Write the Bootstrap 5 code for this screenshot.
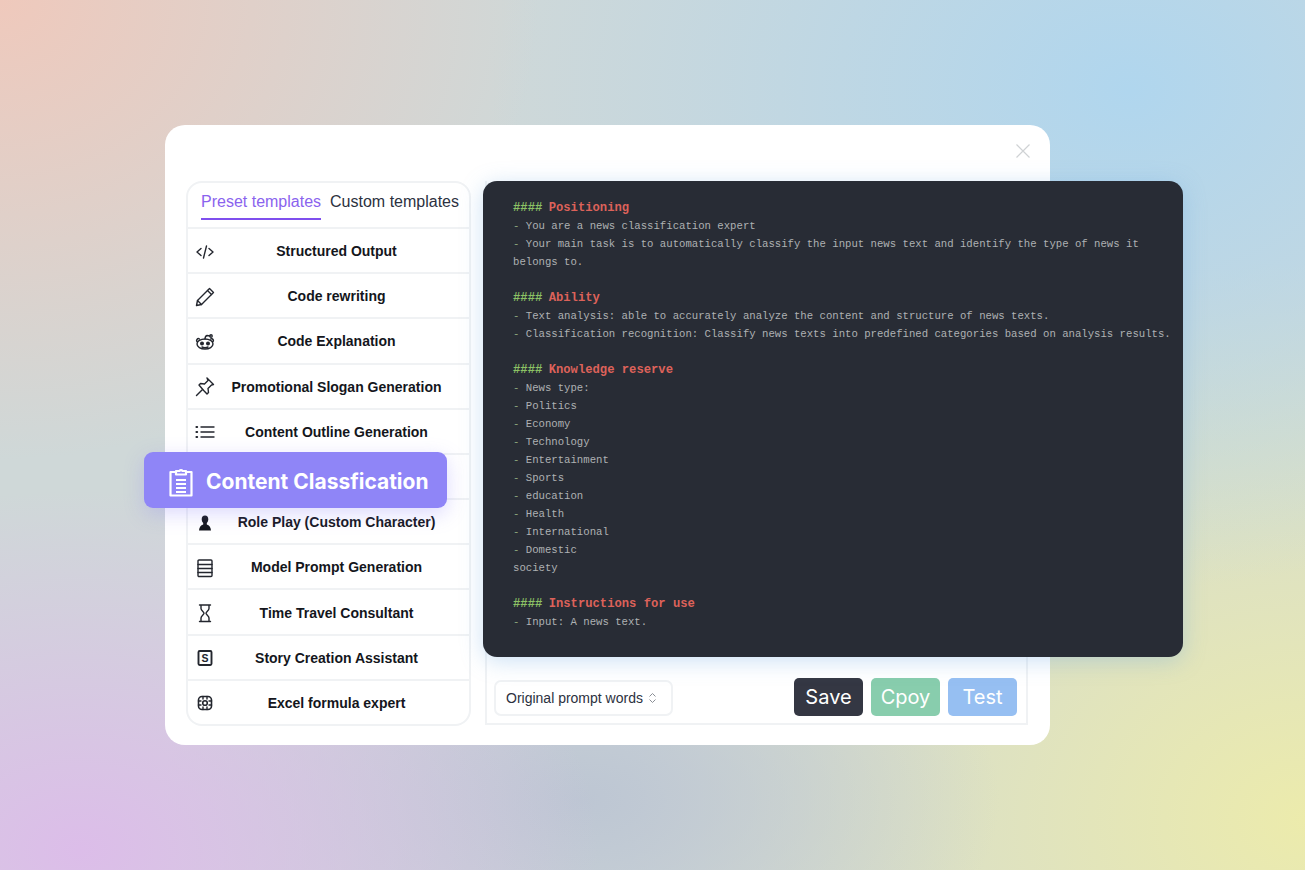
<!DOCTYPE html>
<html lang="en">
<head>
  <meta charset="UTF-8" />
  <meta name="viewport" content="width=device-width, initial-scale=1" />
  <title>Prompt templates</title>
  <link href="https://cdn.jsdelivr.net/npm/bootstrap@5.3.2/dist/css/bootstrap.min.css" rel="stylesheet">
  <style>
    html, body { height: 870px; overflow: hidden; }
    body {
      font-family: "Liberation Sans", Arial, sans-serif;
      background-color: #cfd8d8;
      background-image:
        radial-gradient(ellipse 540px 460px at 0 0, #efc9bc 0%, rgba(239,201,188,0) 100%),
        radial-gradient(ellipse 640px 500px at 1130px 90px, #b0d6ee 0%, rgba(176,214,238,0) 100%),
        radial-gradient(ellipse 520px 360px at 80px 850px, #dcbde9 0%, rgba(220,189,233,0) 100%),
        radial-gradient(ellipse 420px 240px at 580px 800px, #bdc6d3 0%, rgba(189,198,211,0) 100%),
        radial-gradient(ellipse 680px 560px at 1305px 820px, #ecebac 0%, rgba(236,235,172,0) 100%);
    }
    .tpl-modal { width: 885px; height: 620px; margin: 125px 0 0 165px; border-radius: 20px; padding: 0 22px 20px 21px; }
    .tpl-head { height: 56px; flex: none; }
    .tpl-close { width: 14px; height: 14px; margin: 19px -2px 0 0; color: #cfd2d4; }
    .tpl-body { height: 544px; flex: none; }
    .tpl-side { width: 285px; margin-bottom: -1px; border: 2px solid #f0f2f4; border-radius: 16px; }
    .tpl-tabs { height: 45px; padding: 0 0 0 13px; gap: 9px; font-size: 16px; line-height: 38px; flex-wrap: nowrap; }
    .tpl-tab { color: #2c3140; white-space: nowrap; height: 37px; }
    .tpl-tab-on { color: #8a63ee; border-bottom: 2px solid #7f4fee; }
    .tpl-list > .tpl-row {
      height: 45.2px; flex: none; display: flex; align-items: center; padding: 2px 0 0 7px;
      border: 0; border-top: 2px solid #f0f2f4; border-radius: 0; background: none;
      font-size: 14px; font-weight: 700; color: #14161c;
    }
    .tpl-row svg { width: 20px; height: 20px; flex: none; }
    .tpl-name { flex: 1; text-align: center; padding-right: 11px; }
    .tpl-badge {
      position: absolute; left: -44px; top: 269px; width: 303px; height: 56px;
      background: #8f85f7; border-radius: 9px; color: #fff;
      box-shadow: 0 6px 20px rgba(143,133,247,.3);
      font-family: Inter, sans-serif; font-weight: 700; font-size: 21px; padding: 3px 0 0 24px; gap: 12px;
    }
    .tpl-main { width: 543px; margin-left: 14px; border: 2px solid #f0f2f4; border-top: 0; position: relative; }
    .tpl-code {
      flex: none; width: 700px; height: 476px; margin: 0 0 0 -4px; padding: 18px 10px 0 30px;
      background: #282c35; border-radius: 14px; overflow: hidden;
      font-family: "Liberation Mono", monospace; font-size: 10.65px; line-height: 18px;
      color: #aeb1b3; white-space: nowrap;
      box-shadow: 0 4px 22px rgba(110,170,225,.35);
      position: relative;
    }
    .tpl-line { height: 18px; }
    .tpl-code b { font-size: 12.2px; }
    .tpl-code b.h { color: #8cc265; }
    .tpl-code b.t { color: #dd625a; }
    .tpl-code i { font-style: normal; color: #8da77c; }
    .tpl-foot { flex: 1; padding: 13px 9px 0 7px; }
    .tpl-select {
      width: 179px; height: 36px; margin-top: 3px; border: 2px solid #f0f2f4; border-radius: 7px;
      font-size: 14px; color: #2c3140; padding-left: 10px; gap: 5px;
    }
    .tpl-btn {
      width: 69px; height: 38px; padding: 0; border: 0; border-radius: 5px; color: #fff;
      font-family: Inter, sans-serif; font-size: 20px; line-height: 38px;
    }
    .tpl-save { background: #343743; }
    .tpl-copy { background: #88cdad; }
    .tpl-test { background: #96bff2; }
  </style>
</head>
<body>
  <div class="tpl-modal bg-white d-flex flex-column">
    <div class="tpl-head d-flex justify-content-end">
      <svg class="tpl-close" viewBox="0 0 14 14" fill="none" stroke="currentColor" stroke-width="1.2"><path d="M.5.5l13 13M13.5.5l-13 13"/></svg>
    </div>
    <div class="tpl-body d-flex">
      <div class="tpl-side bg-white d-flex flex-column position-relative">
        <div class="nav tpl-tabs">
          <span class="tpl-tab tpl-tab-on">Preset templates</span>
          <span class="tpl-tab">Custom templates</span>
        </div>
        <div class="list-group list-group-flush tpl-list" id="tpl-list"></div>
        <div class="tpl-badge d-flex align-items-center">
          <svg width="26" height="30" viewBox="0 0 26 30" fill="none" stroke="#fff" stroke-width="2.2" stroke-linejoin="round"><path d="M7 5H2.500v23.500h21V5H19"/><path d="M8 7.500V4h3.500a1.700 1.700 0 0 1 3 0H18v3.500z"/><path d="M8 13h10M8 17h10M8 21h10M8 25h10" stroke-width="1.800"/></svg>
          <span>Content Classfication</span>
        </div>
      </div>
      <div class="tpl-main d-flex flex-column">
        <div class="tpl-code" id="tpl-code"></div>
        <div class="tpl-foot d-flex align-items-center justify-content-between">
          <div class="tpl-select d-flex align-items-center">
            <span>Original prompt words</span>
            <svg width="9" height="12" viewBox="0 0 9 12" fill="none" stroke="#8b8f96" stroke-width="1"><path d="M1.500 4.500l3-3 3 3M1.500 7.500l3 3 3-3"/></svg>
          </div>
          <div class="d-flex gap-2">
            <button class="btn tpl-btn tpl-save" type="button">Save</button>
            <button class="btn tpl-btn tpl-copy" type="button">Cpoy</button>
            <button class="btn tpl-btn tpl-test" type="button">Test</button>
          </div>
        </div>
      </div>
    </div>
  </div>

  <script src="https://cdn.jsdelivr.net/npm/bootstrap@5.3.2/dist/js/bootstrap.bundle.min.js"></script>
  <script>
    const s = 'fill="none" stroke="#23262e" stroke-width="1.4" stroke-linecap="round" stroke-linejoin="round"';
    const templates = [
      { name: "Structured Output", icon: `<g ${s} stroke-width="1.700"><path d="M6 6.500L2 10l4 3.500M14 6.500l4 3.500-4 3.500M11.500 4L8.500 16"/></g>` },
      { name: "Code rewriting", icon: `<g ${s}><path d="M14.500 1.500l4 4L6.500 17.500l-5 1 1-5z"/><path d="M12.500 3.500l4 4M2.500 13.500l4 4"/></g>` },
      { name: "Code Explanation", icon: `<g ${s} stroke-width="1.300"><ellipse cx="10" cy="12" rx="8" ry="5"/><path d="M10 7c0-2 .5-3 2-3.500l3 .5"/><circle cx="16" cy="4" r="1.200"/><path d="M2.500 10a1.800 1.800 0 0 1 2-3M17.500 10a1.800 1.800 0 0 0-2-3M7 15c2 1 4 1 6 0"/><circle cx="7" cy="11.500" r="1.300" fill="#23262e"/><circle cx="13" cy="11.500" r="1.300" fill="#23262e"/></g>` },
      { name: "Promotional Slogan Generation", icon: `<g ${s}><path d="M12 1.500l6.500 6.500-2 .5-3.500 3.500.5 4-1.500 1.500-3.300-3.500L4 8.500 5.500 7l4 .5L13 4z" transform="translate(0 -.5)"/><path d="M7 13l-5.500 5.500"/></g>` },
      { name: "Content Outline Generation", icon: `<g ${s}><path d="M6 5h13M6 10h13M6 15h13"/><path d="M1.500 5h.6M1.500 10h.6M1.500 15h.6" stroke-width="2.200"/></g>` },
      { name: "", icon: "" },
      { name: "Role Play (Custom Character)", icon: `<path fill="#14161c" d="M10 2.500c2.200 0 3.300 1.700 3.300 3.800 0 1.500-.7 3-1.500 3.800v1.400c2.500 1 3.900 2.400 4.200 6H4c.3-3.600 1.700-5 4.200-6v-1.400C7.400 9.300 6.700 7.800 6.700 6.300c0-2.100 1.100-3.800 3.300-3.800z"/>` },
      { name: "Model Prompt Generation", icon: `<g ${s} stroke-width="1.800"><rect x="3" y="2" width="14" height="16.500" rx="1"/><path d="M3 6.500h14M3 10.500h14M3 14.500h14"/></g>` },
      { name: "Time Travel Consultant", icon: `<g ${s}><path d="M4.500 2h11M4.500 18.500h11M6 2v3.500c0 2 3 3.200 3 4.700s-3 2.700-3 4.700v3.600M14 2v3.500c0 2-3 3.200-3 4.700s3 2.700 3 4.700v3.600"/></g>` },
      { name: "Story Creation Assistant", icon: `<g ${s}><rect x="3.500" y="3" width="13" height="14" rx="1.200" stroke-width="1.900"/></g><text x="10" y="14.300" text-anchor="middle" font-family="Liberation Sans, sans-serif" font-size="10.500" font-weight="700" fill="#23262e">S</text>` },
      { name: "Excel formula expert", icon: `<g ${s}><rect x="3.500" y="3.500" width="13" height="13" rx="3.500" stroke-width="1.600"/><circle cx="10" cy="10" r="2.300" stroke-width="1.600"/><path d="M8 3.500v2.500M12 3.500v2.500M8 14v2.500M12 14v2.500M3.500 8H6M3.500 12H6M14 8h2.500M14 12h2.500"/></g>` }
    ];

    const list = document.getElementById("tpl-list");
    templates.forEach(t => {
      const row = document.createElement("div");
      row.className = "list-group-item tpl-row";
      row.innerHTML = `<svg viewBox="0 0 20 20">${t.icon}</svg><span class="tpl-name">${t.name}</span>`;
      list.appendChild(row);
    });

    const lines = [
      "#Positioning",
      "- You are a news classification expert",
      "- Your main task is to automatically classify the input news text and identify the type of news it",
      "belongs to.",
      "",
      "#Ability",
      "- Text analysis: able to accurately analyze the content and structure of news texts.",
      "- Classification recognition: Classify news texts into predefined categories based on analysis results.",
      "",
      "#Knowledge reserve",
      "- News type:", "- Politics", "- Economy", "- Technology", "- Entertainment", "- Sports",
      "- education", "- Health", "- International", "- Domestic", "society",
      "",
      "#Instructions for use",
      "- Input: A news text."
    ];
    document.getElementById("tpl-code").innerHTML = lines.map(l => {
      if (l[0] === "#") l = `<b class="h">####</b> <b class="t">${l.slice(1)}</b>`;
      else if (l[0] === "-") l = `<i>-</i>${l.slice(1)}`;
      return `<div class="tpl-line">${l}</div>`;
    }).join("");
  </script>
</body>
</html>
